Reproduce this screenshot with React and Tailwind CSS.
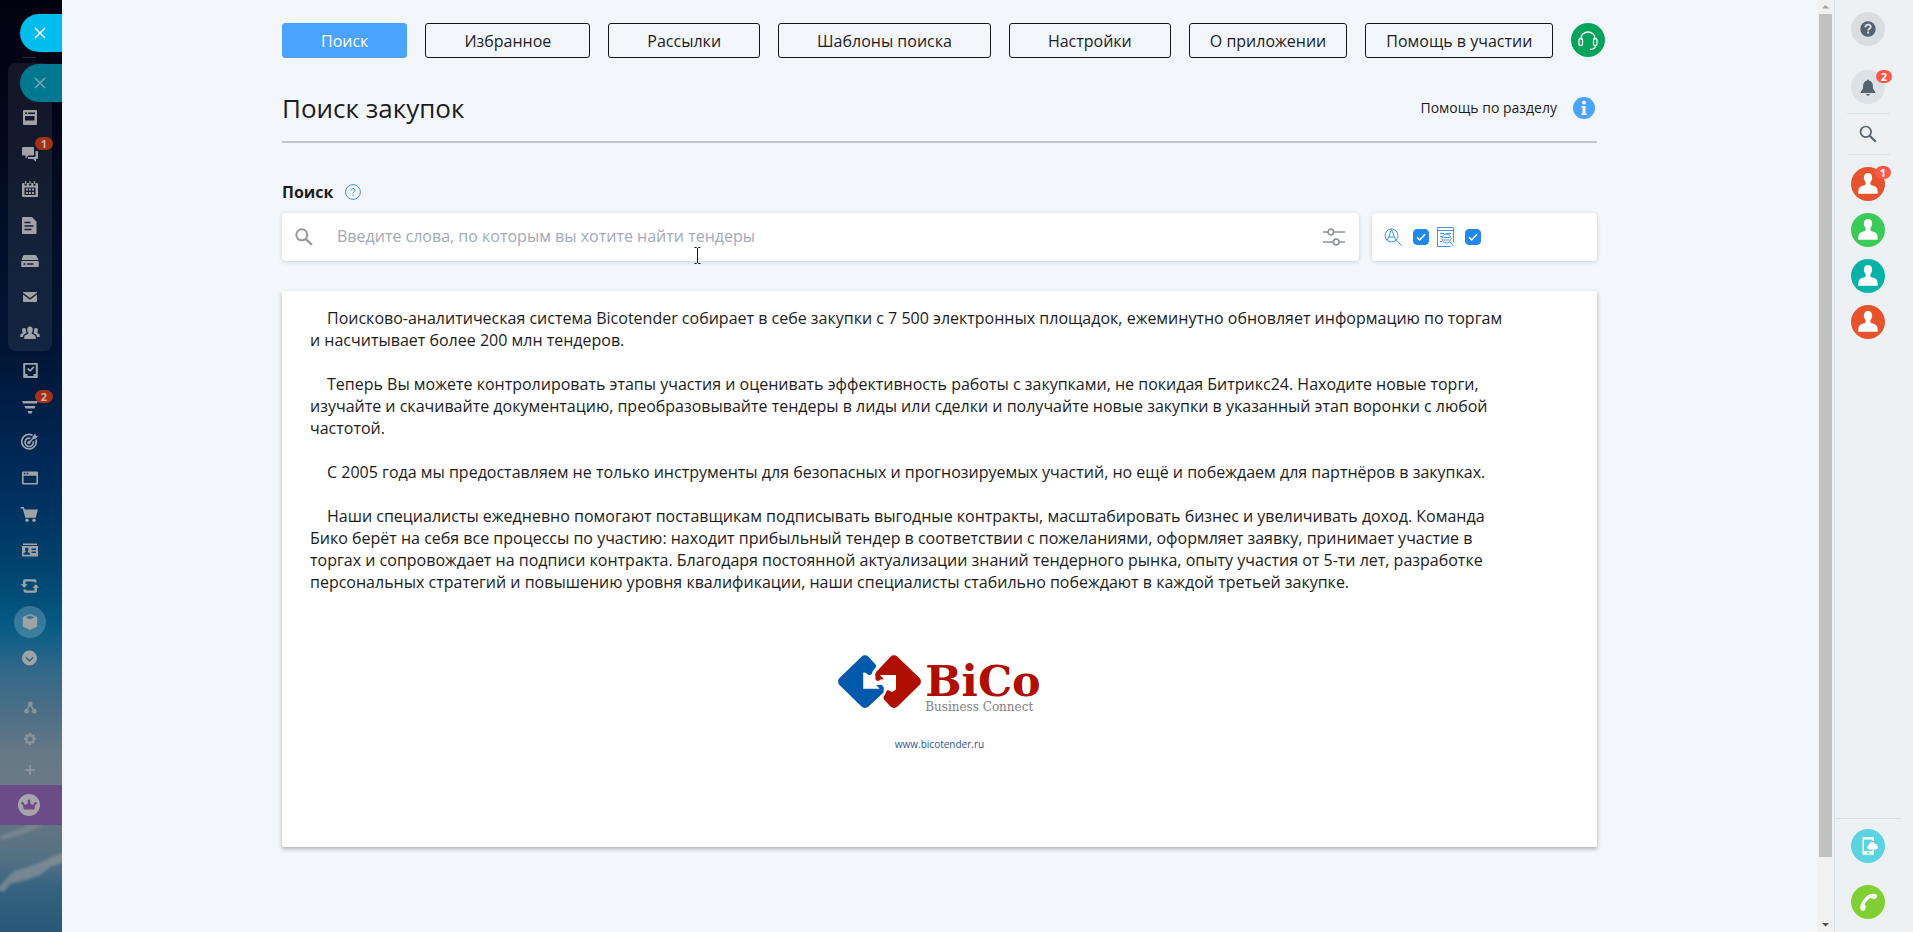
import React from "react";

const G = ({ children, size = 24 }) => (
  <svg width={size} height={size} viewBox="0 0 24 24" fill="currentColor" fillRule="evenodd" aria-hidden="true" className="shrink-0">
    {children}
  </svg>
);

const FeedIcon = () => (
  <G>
    <path d="M6 5h12a1 1 0 0 1 1 1v13a1 1 0 0 1-1 1H6a1 1 0 0 1-1-1V6a1 1 0 0 1 1-1zM7 7.500v1.500h2v-1.500zM10 7.500v1.500h7v-1.500zM7 11v4.500h9.500v-4.500z" />
  </G>
);
const ChatIcon = () => (
  <G>
    <path d="M5 6h10a1 1 0 0 1 1 1v6.500a1 1 0 0 1-1 1h-4.500l-3 3v-3H5a1 1 0 0 1-1-1V7a1 1 0 0 1 1-1z" />
    <path d="M17.500 10h1.500a1 1 0 0 1 1 1v6a1 1 0 0 1-1 1h-1v2.800L15 18h-4a1 1 0 0 1-1-1v-1h6.500a1 1 0 0 0 1-1z" />
  </G>
);
const CalendarIcon = () => (
  <G>
    <path d="M5 6h1.500v1.500a1.200 1.200 0 0 0 2.400 0V6h2v1.500a1.200 1.200 0 0 0 2.400 0V6h2v1.500a1.200 1.200 0 0 0 2.400 0V6H19a1 1 0 0 1 1 1v12a1 1 0 0 1-1 1H5a1 1 0 0 1-1-1V7a1 1 0 0 1 1-1zM6.500 10.500v7.500h11v-7.500z" />
    <path d="M7.100 4h1.200v3H7.100zM11.500 4h1.200v3h-1.200zM15.900 4h1.200v3h-1.200zM8 11.500h2v2H8zM11 11.500h2v2h-2zM14 11.500h2v2h-2zM8 15h2v2H8zM11 15h2v2h-2zM14 15h2v2h-2z" />
  </G>
);
const DocIcon = () => (
  <G>
    <path d="M5 4h9l4.500 4.500V20a1 1 0 0 1-1 1H5a1 1 0 0 1-1-1V5a1 1 0 0 1 1-1zM6.500 8.800v1.500h6v-1.500zM6.500 12.200v1.500h9v-1.500zM6.500 15.800v1.500h7v-1.500z" />
  </G>
);
const DriveIcon = () => (
  <G>
    <path d="M6.500 6h10.500a2 2 0 0 1 1.600.9L20.500 11h-17L5 7a2 2 0 0 1 1.500-1zM4 12h16a.8.8 0 0 1 .8.800v4.400a.8.8 0 0 1-.8.800H4a.8.8 0 0 1-.8-.8v-4.400A.8.8 0 0 1 4 12zM5.500 14.300v1.500h2v-1.500zM9 14.300v1.500h6.500v-1.500z" />
  </G>
);
const MailIcon = () => (
  <G>
    <path d="M5 7h14v.8l-7 5.200-7-5.200zM5 9.500l7 5.200 7-5.200V16a1 1 0 0 1-1 1H6a1 1 0 0 1-1-1z" />
  </G>
);
const GroupIcon = () => (
  <G>
    <path d="M12 5.500c2 0 2.800 1.400 2.800 3.200 0 1.500-.6 2.300-1.100 2.900v1.200l3 1.500c.8.400 1 1 1.100 3.700H6.200c0-2.700.3-3.300 1.100-3.700l3-1.500v-1.200c-.5-.6-1.100-1.400-1.100-2.900 0-1.800.8-3.200 2.800-3.200z" />
    <path d="M6 7c.8 0 1.500.3 1.900.9-.2 1.500.1 3 .9 4l-2.500 1.300c-.9.600-1.200 1.600-1.300 2.800H2.200c0-2 .2-2.600.9-3l1.500-.9v-.8C3.900 9.900 3.600 7 6 7zM18 7c-.8 0-1.500.3-1.900.9.200 1.500-.1 3-.9 4l2.500 1.300c.9.600 1.200 1.600 1.300 2.800h2.800c0-2-.2-2.600-.9-3l-1.500-.9v-.8C20.100 9.900 20.400 7 18 7z" />
  </G>
);
const TaskIcon = () => (
  <G>
    <path d="M6 5h13a.8.8 0 0 1 .8.800v13.400a.8.8 0 0 1-.8.800H6a.8.8 0 0 1-.8-.8V5.800A.8.8 0 0 1 6 5zM7.200 6.800v9.200h2.300v2h6v-2h2.300V6.800z" />
    <path d="M9 11l1.300-1.100 1.800 1.700 3.200-3.300 1.200 1.100-4.400 4.600z" />
  </G>
);
const FunnelIcon = () => (
  <G>
    <path d="M4 7h16l-1.200 2.500H5.200zM6.500 12h11l-1 2.500h-9zM9.500 17h5l-1 2.500h-3z" />
  </G>
);
const TargetIcon = () => (
  <G>
    <g fill="none" stroke="currentColor" strokeWidth="1.700">
      <path d="M14.500 5.200A7.300 7.300 0 1 0 18 9.500" />
      <path d="M12.500 8.300a4.200 4.200 0 1 0 2.800 3" />
      <path d="M11 12.500l6-6" />
    </g>
    <circle cx="11" cy="12.500" r="1.700" />
    <path d="M14.500 6.500l2.800-3 .6 2.200 2.300.7-3 2.700-2.300-.4z" />
  </G>
);
const WindowIcon = () => (
  <G>
    <path d="M5 5.500h14a1 1 0 0 1 1 1v11a1 1 0 0 1-1 1H5a1 1 0 0 1-1-1v-11a1 1 0 0 1 1-1zM5.600 9.700v7.200h12.800V9.700zM5.800 6.800v1.500h1.700V6.800zM8.700 6.800v1.500h1.700V6.800z" />
  </G>
);
const CartIcon = () => (
  <G>
    <path d="M2.500 5h3.300l.9 2.500H20l-2.300 8.200H7.300L4.700 6.500H2.500z" />
    <circle cx="9" cy="18.300" r="1.700" />
    <circle cx="16" cy="18.300" r="1.700" />
  </G>
);
const CardIcon = () => (
  <G>
    <path d="M5 5.500h14V7H5zM4 8h16v10.500H4zM13.500 10.500V12H18v-1.500zM13.500 13.500V15H18v-1.500zM8.800 9.500c-1.300 0-1.800 1-1.700 2.200.1.800.4 1.300.8 1.700v.7l-2 .9c-.4.200-.5.700-.5 1.700h6.800c0-1-.1-1.500-.5-1.700l-2-.9v-.7c.4-.4.700-.9.800-1.700.1-1.200-.4-2.200-1.700-2.200z" />
  </G>
);
const SyncIcon = () => (
  <G>
    <path d="M5 10.200V7a1.800 1.800 0 0 1 1.800-1.800h9.900A1.800 1.800 0 0 1 18.500 7v1.500H16V7.600H7.500v2.600h2.200l-3.500 3.500-3.500-3.500z" />
    <path d="M19 13.800V17a1.800 1.800 0 0 1-1.800 1.800H7.300A1.800 1.800 0 0 1 5.500 17v-1.500H8v.9h8.500v-2.600h-2.200l3.500-3.500 3.500 3.500z" />
  </G>
);
const BoxIcon = () => (
  <G>
    <path d="M12 4l7.200 3v9.600L12 20l-7.200-3.400V7zM12 5.400L7.200 7.300 12 9.300l4.800-2z" />
  </G>
);
const MoreIcon = () => (
  <G>
    <path d="M11.500 4.500a7.500 7.500 0 1 1 0 15 7.500 7.500 0 0 1 0-15zM7.800 10.500v1.700l3.700 3.500 3.700-3.500v-1.700l-3.700 3.200z" />
  </G>
);
const NodesIcon = () => (
  <G>
    <path d="M12 8l-4 7.500M12 8l4.500 7.500" stroke="currentColor" strokeWidth="1.500" fill="none" />
    <circle cx="12.300" cy="8" r="2.400" />
    <circle cx="8.500" cy="15.200" r="2.400" />
    <circle cx="16.200" cy="15.200" r="2.400" />
  </G>
);
const GearIcon = () => (
  <G>
    <circle cx="12" cy="12" r="3.700" fill="none" stroke="currentColor" strokeWidth="2.200" />
    <path d="M12 6v2M12 16v2M6 12h2M16 12h2M7.800 7.800l1.300 1.300M14.900 14.900l1.300 1.300M7.800 16.200l1.300-1.300M14.900 9.100l1.300-1.300" stroke="currentColor" strokeWidth="2.200" />
  </G>
);
const PlusIcon = () => (
  <G>
    <path d="M11 7h2v4h4v2h-4v4h-2v-4H7v-2h4z" />
  </G>
);

const Cross = () => (
  <svg width="12" height="12" viewBox="0 0 12 12" fill="none" stroke="currentColor" strokeWidth="1.500" aria-hidden="true">
    <path d="M1 1l10 10M11 1L1 11" />
  </svg>
);

const Person = () => (
  <svg width="34" height="34" viewBox="0 0 34 34" fill="#fff" aria-hidden="true">
    <path d="M17 6c2.800 0 4 1.800 4 4.200 0 .5.300.8.200 1.500-.1.600-.5 1-.7 1.500-.3 1-.7 1.500-1.100 1.900v2.200c.2.900 3.500 1.500 5.500 2.600 1.500 1 1.700 2.700 1.900 6.900H7.200c.2-4.200.4-5.900 1.900-6.900 2-1.100 5.300-1.700 5.500-2.600v-2.200c-.4-.4-.8-.9-1.100-1.900-.2-.5-.6-.9-.7-1.500-.1-.7.2-1 .2-1.500C13 7.800 14.200 6 17 6z" />
  </svg>
);

const groupItems = [
  { label: "Лента", Icon: FeedIcon },
  { label: "Чат", Icon: ChatIcon, badge: "1" },
  { label: "Календарь", Icon: CalendarIcon },
  { label: "Документы", Icon: DocIcon },
  { label: "Диск", Icon: DriveIcon },
  { label: "Почта", Icon: MailIcon },
  { label: "Группы", Icon: GroupIcon },
];
const menuItems = [
  { label: "Задачи", Icon: TaskIcon },
  { label: "CRM", Icon: FunnelIcon, badge: "2" },
  { label: "Маркетинг", Icon: TargetIcon },
  { label: "Сайты", Icon: WindowIcon },
  { label: "Магазин", Icon: CartIcon },
  { label: "Контакты", Icon: CardIcon },
  { label: "Автоматизация", Icon: SyncIcon },
  { label: "Приложения", Icon: BoxIcon, active: true },
  { label: "Ещё", Icon: MoreIcon },
];
const toolItems = [
  { label: "Карта", Icon: NodesIcon },
  { label: "Параметры", Icon: GearIcon },
  { label: "Добавить", Icon: PlusIcon },
];

const MenuButton = ({ label, Icon, badge, active }) => (
  <li className="flex h-9 items-center justify-center">
    <button type="button" aria-label={label} className={active ? "relative flex size-8 items-center justify-center rounded-full bg-white/20" : "relative flex size-8 items-center justify-center"}>
      <Icon />
      {badge && (
        <span className="absolute top-0 left-[21px] flex h-[13px] w-[18px] items-center justify-center rounded-full bg-[#a63216] text-[11px] leading-none font-bold text-[#c4b5b0]">{badge}</span>
      )}
    </button>
  </li>
);

const Sidebar = () => (
  <aside className="relative h-full w-[62px] shrink-0 overflow-hidden bg-[linear-gradient(to_bottom,#02020f_0px,#020619_110px,#021029_240px,#001534_350px,#00234e_430px,#003362_510px,#00446f_570px,#055a84_625px,#33688a_670px,#4b6e86_710px,#677985_755px,#6a7a85_785px,#5d7482_835px,#527084_862px,#33617f_890px,#2a5878_932px)]">
    <svg className="absolute inset-x-0 top-[810px] h-[122px] w-full" viewBox="0 0 62 122" aria-hidden="true">
      <defs>
        <filter id="soft" x="-50%" y="-100%" width="200%" height="300%">
          <feGaussianBlur stdDeviation="1.800" />
        </filter>
      </defs>
      <g fill="#8a949b" filter="url(#soft)">
        <path d="M-4 28L14 21l20-7 8 2-16 7-22 7z" opacity=".55" />
        <path d="M-4 80l8-9 10-10 14-4 16-6 10-5 10-4v10l-14 5-10 8-14 5-16 4-6 8z" opacity=".7" />
      </g>
    </svg>
    <nav aria-label="Главное меню" className="relative flex flex-col pt-[57px] text-[#a0a2a6]">
      <div className="ml-[22px] h-px w-3.5 bg-white/15" />
      <ul className="mx-2 mt-[5px] w-11 rounded-lg bg-white/7 pt-9">
        {groupItems.map((item) => <MenuButton key={item.label} {...item} />)}
      </ul>
      <ul className="mx-2 mt-px w-11">
        {menuItems.map((item) => <MenuButton key={item.label} {...item} />)}
      </ul>
      <ul className="mx-2 mt-4 w-11 text-[#8a949b]">
        {toolItems.map(({ label, Icon }) => (
          <li key={label} className="flex h-[31px] items-center justify-center">
            <button type="button" aria-label={label}><Icon /></button>
          </li>
        ))}
      </ul>
      <button type="button" aria-label="Тариф" className="flex h-10 items-center bg-[#6b4c86] pl-[18px]">
        <svg width="22" height="22" viewBox="0 0 22 22" aria-hidden="true">
          <circle cx="11" cy="11" r="11" fill="#a9a3ad" />
          <path d="M4.500 9l3.300 2L10 9V7h2v2l2.200 2 3.300-2-1.200 6.500H5.700z" fill="#6b4c86" />
          <g fill="#6b4c86"><circle cx="4.500" cy="9.300" r="1.300" /><circle cx="11" cy="7" r="1.400" /><circle cx="17.500" cy="9.300" r="1.300" /></g>
        </svg>
      </button>
    </nav>
    <button type="button" aria-label="Закрыть" className="absolute top-3.5 right-0 flex h-[38px] w-[42px] items-center rounded-l-full bg-[#00bdee] pl-3.5 text-white"><Cross /></button>
    <button type="button" aria-label="Закрыть нижний слой" className="absolute top-16 right-0 flex h-[38px] w-[42px] items-center rounded-l-full bg-[#00788f] pl-3.5 text-[#7aa5b2]"><Cross /></button>
  </aside>
);

const tabs = [
  { label: "Избранное", pad: "px-[38px]" },
  { label: "Рассылки", pad: "px-[38px]" },
  { label: "Шаблоны поиска", pad: "px-[38px]" },
  { label: "Настройки", pad: "px-[38px]" },
  { label: "О приложении", pad: "px-5" },
  { label: "Помощь в участии", pad: "px-5" },
];

const Checkbox = ({ label }) => (
  <span className="relative flex size-4">
    <input type="checkbox" defaultChecked aria-label={label} className="peer size-4 appearance-none rounded border border-[#2188ee] bg-white checked:bg-[#2188ee]" />
    <svg className="pointer-events-none absolute inset-0 hidden peer-checked:block" width="16" height="16" viewBox="0 0 16 16" fill="none" stroke="#fff" strokeWidth="1.500" aria-hidden="true">
      <path d="M4 8.300l2.700 2.700L12 5.300" />
    </svg>
  </span>
);

const paragraphs = [
  "Поисково-аналитическая система Bicotender собирает в себе закупки с 7 500 электронных площадок, ежеминутно обновляет информацию по торгам и насчитывает более 200 млн тендеров.",
  "Теперь Вы можете контролировать этапы участия и оценивать эффективность работы с закупками, не покидая Битрикс24. Находите новые торги, изучайте и скачивайте документацию, преобразовывайте тендеры в лиды или сделки и получайте новые закупки в указанный этап воронки с любой частотой.",
  "С 2005 года мы предоставляем не только инструменты для безопасных и прогнозируемых участий, но ещё и побеждаем для партнёров в закупках.",
  "Наши специалисты ежедневно помогают поставщикам подписывать выгодные контракты, масштабировать бизнес и увеличивать доход. Команда Бико берёт на себя все процессы по участию: находит прибыльный тендер в соответствии с пожеланиями, оформляет заявку, принимает участие в торгах и сопровождает на подписи контракта. Благодаря постоянной актуализации знаний тендерного рынка, опыту участия от 5-ти лет, разработке персональных стратегий и повышению уровня квалификации, наши специалисты стабильно побеждают в каждой третьей закупке.",
];

const Logo = () => (
  <div className="flex justify-center gap-1">
    <svg width="83" height="54" viewBox="0 0 83 54" aria-hidden="true">
      <path fill="#0059ab" d="M23.500 1.800a5 5 0 0 1 7 0L38 10v1.500c-1 2.500-2 3-3 4.300-.8 1-.5 2.500-1.500 3.500-1.300 1.200-3.300 1-4.300-.3-.8-1-2.500-1.800-4-1.500v16.300h16.500l-3.700-4.100c1.500 0 3 .7 4.500 0 1.500.3 3 1.300 3.300 3 .2 1.600-.5 2.800 0 4.500L30.500 51.500a5 5 0 0 1-7 0L1.500 30a5 5 0 0 1 0-7z" />
      <path fill="#b00e00" d="M52.500 1.800a5 5 0 0 1 7 0L81.500 23a5 5 0 0 1 0 7L59.500 51.500a5 5 0 0 1-7 0L46 44.500c-.8-2-.5-3 .5-4.300 1.300-1.500 1.600-3.300 2.500-4.600 2.500-1.300 3 1 5 1.300l4-2.500V20H42l4 4.200-3.500.3c-1 1-2 1.800-3.500 1.200-1.700-.7-2-2.500-1.300-4-.9-1.700-.6-3.300.8-5z" />
    </svg>
    <div className="flex flex-col pt-2 font-['DejaVu_Serif',serif]">
      <span className="text-[43px] leading-9 font-bold text-[#b00e00]">BiCo</span>
      <span className="text-xs leading-4 text-[#7f7f7f]">Business Connect</span>
    </div>
  </div>
);

const Workspace = () => (
  <main className="min-w-0 flex-1 overflow-hidden bg-[#f3f7fc] text-base text-[#1c1c1c]">
    <div className="mx-auto w-full max-w-[1315px] pt-[23px]">
      <nav aria-label="Разделы" className="flex gap-[18px] whitespace-nowrap">
        <button type="button" aria-current="page" className="h-[35px] shrink-0 rounded-[3px] border border-[#4aa3fc] bg-[#4aa3fc] px-[38px] text-white">Поиск</button>
        {tabs.map(({ label, pad }) => (
          <button key={label} type="button" className={`h-[35px] shrink-0 rounded-[3px] border border-[#151515] ${pad}`}>{label}</button>
        ))}
        <button type="button" aria-label="Поддержка" className="size-[34px] shrink-0 rounded-full bg-[#04a55a]">
          <svg width="34" height="34" viewBox="0 0 34 34" fill="none" stroke="#fff" strokeWidth="1.300" strokeLinecap="round" aria-hidden="true">
            <path d="M10 16v-1a7 6 0 0 1 14 0v1" />
            <rect x="8" y="15.500" width="3.500" height="7" rx="1.600" />
            <rect x="22.500" y="15.500" width="3.500" height="7" rx="1.600" />
            <path d="M24.500 22.500c0 2.400-1.500 3.600-5 3.900" />
          </svg>
        </button>
      </nav>

      <header className="mt-[17px] flex h-[68px] items-center justify-between border-b-2 border-[#c3c7cb] pr-0.5">
        <h1 className="text-[26px] leading-8">Поиск закупок</h1>
        <a href="#help" className="flex items-center gap-4 text-sm">
          Помощь по разделу
          <svg width="22" height="22" viewBox="0 0 22 22" aria-hidden="true">
            <circle cx="11" cy="11" r="11" fill="#4aa3fc" />
            <circle cx="11" cy="5.500" r="1.900" fill="#fff" />
            <path d="M8.500 9h4v7.500h1.200V18H8.300v-1.500h1.200v-6h-1z" fill="#fff" />
          </svg>
        </a>
      </header>

      <div className="mt-[38px] flex h-[22px] items-center gap-3">
        <label htmlFor="query" className="font-bold">Поиск</label>
        <svg width="16" height="16" viewBox="0 0 16 16" fill="none" stroke="#3e93e6" aria-hidden="true">
          <circle cx="8" cy="8" r="7.400" />
          <path d="M5.900 6.500C5.900 3.900 10.100 4 10.100 6.300c0 1.500-2.100 1.500-2.100 3.200M8 10.800v1.200" />
        </svg>
      </div>

      <div className="mt-2.5 flex gap-[13px]">
        <div className="flex h-12 flex-1 items-center rounded bg-white px-[13px] shadow-[0_1px_4px_rgba(0,0,0,0.16)]">
          <svg width="18" height="18" viewBox="0 0 18 18" fill="none" stroke="#979ba1" strokeWidth="2" aria-hidden="true">
            <circle cx="6.800" cy="6.800" r="5.500" />
            <path d="M10.800 10.800l6 6" strokeWidth="2.400" />
          </svg>
          <input id="query" type="text" placeholder="Введите слова, по которым вы хотите найти тендеры" className="ml-6 h-full min-w-0 flex-1 bg-transparent pb-0.5 outline-none placeholder:text-[#a3aab8]" />
          <button type="button" aria-label="Фильтры">
            <svg width="24" height="20" viewBox="0 0 24 20" fill="none" stroke="#8f949a" strokeWidth="1.700" aria-hidden="true">
              <path d="M1 5h5M11.500 5H23M1 15h10.500M17 15h6" />
              <circle cx="8.800" cy="5" r="2.800" />
              <circle cx="14.200" cy="15" r="2.800" />
            </svg>
          </button>
        </div>
        <div className="flex h-12 w-[225px] items-center rounded bg-white pl-3 shadow-[0_1px_4px_rgba(0,0,0,0.16)]">
          <svg width="18" height="18" viewBox="0 0 18 18" fill="none" stroke="#4592e6" aria-hidden="true">
            <circle cx="7.500" cy="7.500" r="6.500" />
            <path d="M3.300 12.500L7.500 1.300l4.300 11.200M4.600 9h5.800M12.200 12.200l5.300 5.300" />
          </svg>
          <span className="ml-[11px]"><Checkbox label="Морфология" /></span>
          <svg className="mr-2.5 ml-2" width="18" height="20" viewBox="0 0 18 20" fill="none" stroke="#4592e6" aria-hidden="true">
            <path d="M16.500 15V.5H.5v19h13M.5 3.500h16M3 6.500h4M9 6.500h5M3 9.500h2M3 14.500h2" />
            <circle cx="9.500" cy="11.500" r="4.500" />
            <path d="M6.500 10.500h6M6.500 13h6M12.800 15l3.700 4" />
          </svg>
          <Checkbox label="Искать в документации" />
        </div>
      </div>

      <section className="mt-[30px] min-h-[556px] rounded-[2px] bg-white pt-4 pr-[87px] pl-7 shadow-[0_2px_4px_rgba(0,0,0,0.3)]">
        <div className="flex flex-col gap-[22px] leading-[22px]">
          {paragraphs.map((text) => <p key={text} className="indent-[17px]">{text}</p>)}
        </div>
        <div className="mt-[62px] -mr-[59px] flex flex-col items-center">
          <Logo />
          <a href="#site" className="mt-[21px] text-[10px] leading-4 font-medium text-[#1f5596]">www.bicotender.ru</a>
        </div>
      </section>
    </div>
  </main>
);

const Scrollbar = () => (
  <div className="flex h-full w-[17px] shrink-0 flex-col items-center bg-[#f1f1f1]">
    <svg className="my-1" width="7" height="6" viewBox="0 0 7 6" aria-hidden="true"><path d="M0 4.500L3.500 1 7 4.500z" fill="#a3a3a3" /></svg>
    <div className="w-[13px] flex-[843] bg-[#c1c1c1]" />
    <div className="flex-[65]" />
    <svg className="mb-1" width="7" height="6" viewBox="0 0 7 6" aria-hidden="true"><path d="M0 1l3.500 3.500L7 1z" fill="#505050" /></svg>
  </div>
);

const people = [
  { name: "Контакт 1", color: "bg-[#e6532c]", badge: "1" },
  { name: "Контакт 2", color: "bg-[#3bcb58]" },
  { name: "Контакт 3", color: "bg-[#05b2a8]" },
  { name: "Контакт 4", color: "bg-[#e6532c]" },
];

const CountBadge = ({ children, className }) => (
  <span className={`absolute flex h-[13px] w-4 items-center justify-center rounded-full bg-[#ff5845] text-[11px] leading-none font-bold text-white ${className}`}>{children}</span>
);

const RightBar = () => (
  <aside className="flex h-full w-[79px] shrink-0 flex-col items-center border-l border-[#dce1e6] bg-[#edf1f4] pt-3 pr-3 pb-[13px]">
    <button type="button" aria-label="Помощь" className="flex size-[34px] items-center justify-center rounded-full bg-[#d8dde1]">
      <svg width="16" height="16" viewBox="0 0 16 16" aria-hidden="true">
        <circle cx="8" cy="8" r="7.700" fill="#56616e" />
        <path d="M5.400 6.200C5.400 2.700 10.700 2.800 10.700 5.900 10.700 7.700 8.100 7.700 8.100 9.400M8.100 10.600v2" fill="none" stroke="#d8dde1" strokeWidth="1.900" />
      </svg>
    </button>
    <button type="button" aria-label="Уведомления" className="relative mt-6 flex size-[34px] items-center justify-center rounded-full bg-[#dde2e6]">
      <svg width="16" height="17" viewBox="0 0 16 17" fill="#56616e" aria-hidden="true">
        <path d="M7 1.500a1 1 0 0 1 2 0c2.800.6 3.800 2.700 3.900 5.500.1 3 .6 4.200 2.300 5.500V14H.8v-1.500C2.500 11.200 3 10 3.100 7 3.200 4.200 4.200 2.100 7 1.500zM6 15h4c-.3 1.200-1 1.700-2 1.700S6.300 16.200 6 15z" />
      </svg>
      <CountBadge className="top-0 left-[25px]">2</CountBadge>
    </button>
    <div className="mt-[9px] flex h-[42px] w-[43px] items-center justify-center border-y border-[#dde2e6]">
      <button type="button" aria-label="Найти">
        <svg width="18" height="18" viewBox="0 0 18 18" fill="none" stroke="#56616e" strokeWidth="1.700" aria-hidden="true">
          <circle cx="6.800" cy="6.800" r="5.300" />
          <path d="M10.700 10.700l6 6" strokeWidth="2.200" />
        </svg>
      </button>
    </div>
    <ul className="mt-3 flex flex-col gap-3">
      {people.map(({ name, color, badge }) => (
        <li key={name} className="relative">
          <button type="button" aria-label={name} className={`block size-[34px] rounded-full ${color}`}><Person /></button>
          {badge && <CountBadge className="-top-px left-6">{badge}</CountBadge>}
        </li>
      ))}
    </ul>
    <div className="mt-auto flex flex-col items-center gap-[22px] self-stretch border-t border-[#d8dee3] pt-2.5">
      <button type="button" aria-label="Мобильное приложение" className="size-[34px] rounded-full bg-[#5bd3e0]">
        <svg width="34" height="34" viewBox="0 0 34 34" fill="#fff" fillRule="evenodd" aria-hidden="true">
          <path d="M13 8h8.500c1 0 1.500.6 1.500 1.500V12h-1.800v-1.500H13V22h8.200v-1H23v3.500c0 .9-.5 1.500-1.500 1.500H13c-1 0-1.500-.6-1.500-1.500v-15c0-.9.500-1.500 1.500-1.500zM16 23.300v1.400h2.500v-1.400z" />
          <path d="M18.500 20.500c-3 0-3.200-3.800-.5-4.200.2-3.600 4.600-4.200 5.800-1.500 1.800 0 2 1 2 1.800 1.700.6 1.500 3.900-.8 3.900z" />
        </svg>
      </button>
      <button type="button" aria-label="Позвонить" className="size-[34px] rounded-full bg-[#80d035]">
        <svg width="34" height="34" viewBox="0 0 34 34" fill="#fff" aria-hidden="true">
          <path d="M18.500 9.500c2.200-1 5.500-1 7 .3.800.8.500 2.700-.2 3.500-.7.900-3.600 1-4.400.3l-.8-.9c-2.500 1-5.500 4-6.600 7l.9.900c.6.900.3 3.900-.7 4.600-1 .7-2.900.8-3.600 0-1.300-1.500-.9-4.700.2-6.900 1.700-3.600 4.700-7.200 8.200-8.800z" />
        </svg>
      </button>
    </div>
  </aside>
);

export default function App() {
  return (
    <div className="flex h-screen w-full overflow-hidden font-['Open_Sans','Noto_Sans',sans-serif]">
      <Sidebar />
      <Workspace />
      <Scrollbar />
      <RightBar />
      <svg className="pointer-events-none absolute top-[247px] left-[693px]" width="9" height="17" viewBox="0 0 9 17" fill="none" stroke="#111" aria-hidden="true">
        <path d="M1.500.5h2l1 1 1-1h2M4.500 1.500v14M1.500 16.500h2l1-1 1 1h2" />
      </svg>
    </div>
  );
}
